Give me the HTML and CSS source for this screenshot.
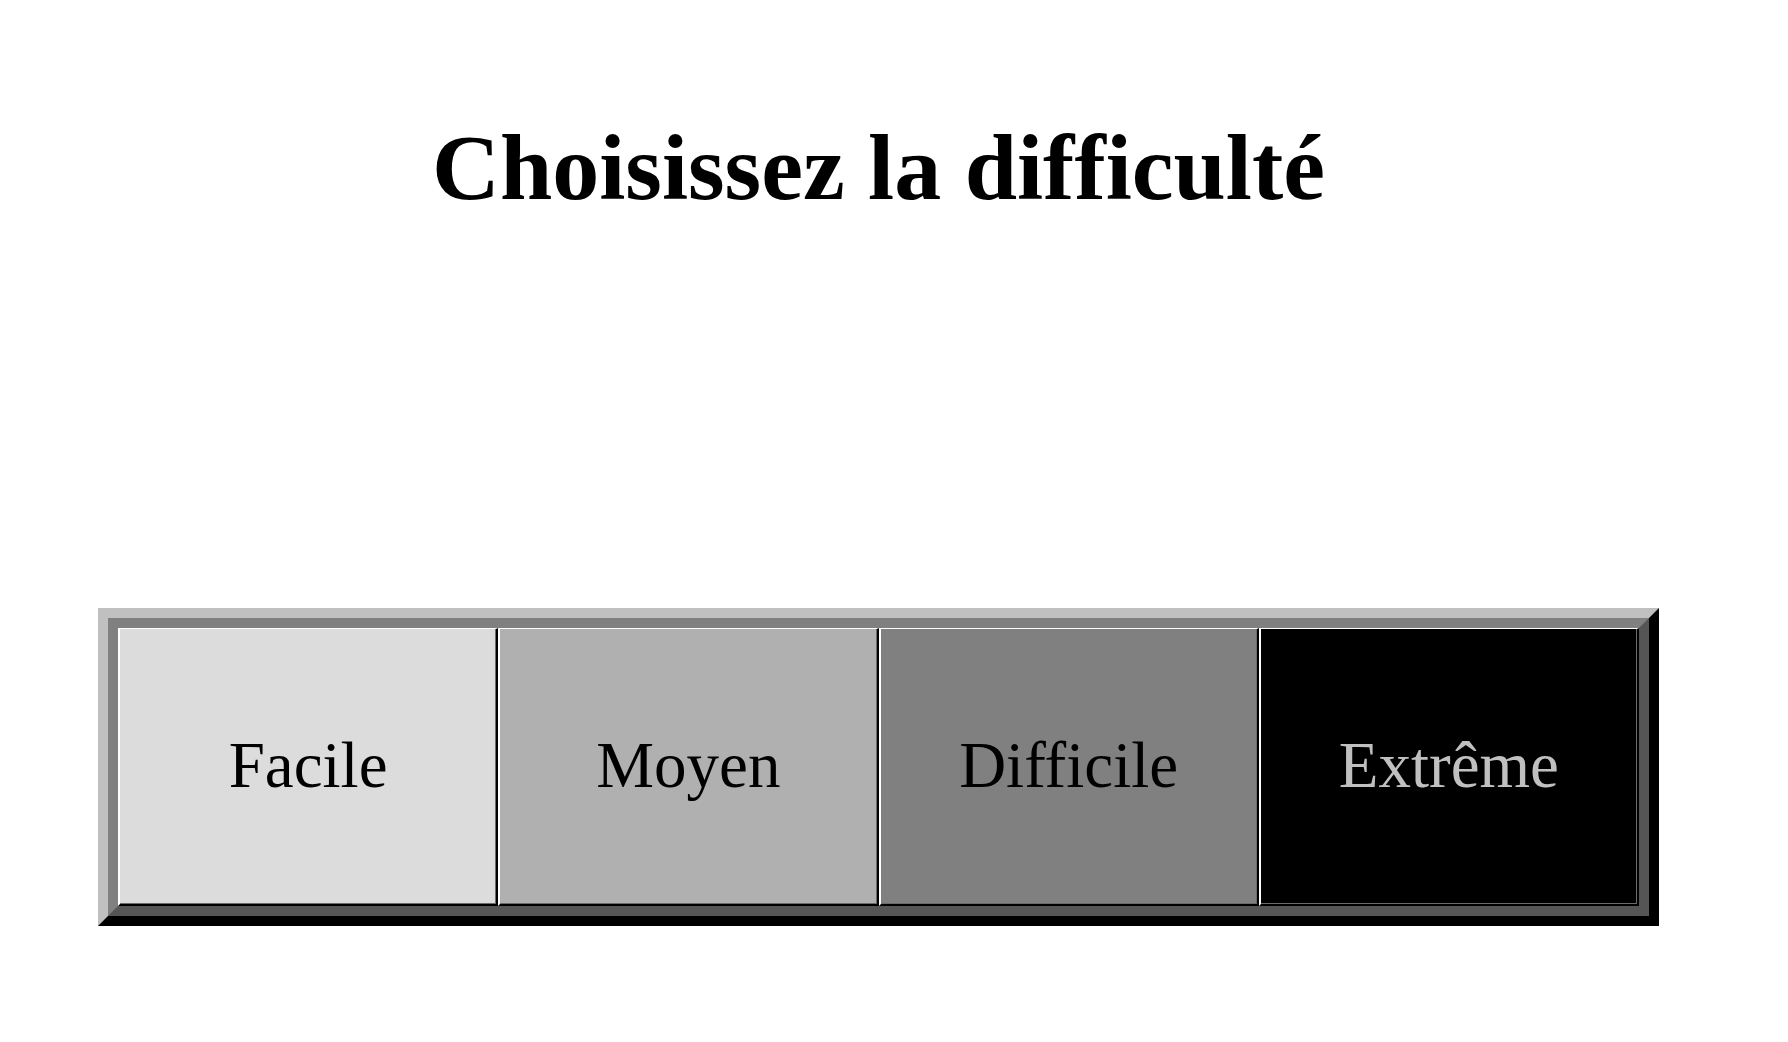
FILE: index.html
```html
<!DOCTYPE html>
<html lang="fr">
<head>
<meta charset="utf-8">
<title>Choisissez la difficulté</title>
<link rel="stylesheet" href="styles.css">
</head>
<body>
<div class="page">
  <h1 class="title">Choisissez la difficulté</h1>
  <div class="frame">
    <div class="levels">
      <div class="level level-easy">Facile</div>
      <div class="level level-medium">Moyen</div>
      <div class="level level-hard">Difficile</div>
      <div class="level level-extreme">Extrême</div>
    </div>
  </div>
</div>
</body>
</html>
```

FILE: styles.css
```css
html, body {
  margin: 0;
  padding: 0;
  background: #ffffff;
}

body {
  font-family: "Liberation Serif", "Times New Roman", serif;
  color: #000;
}

.page {
  width: 1561px;
  margin-left: 98px;
  padding-top: 113px;
}

.title {
  margin: 0;
  font-size: 94px;
  font-weight: bold;
  line-height: 108px;
  text-align: center;
}

.frame {
  margin-top: 387px;
  border: 10px solid;
  border-color: #c0c0c0 #000000 #000000 #c0c0c0;
}

.levels {
  display: grid;
  grid-template-columns: repeat(4, 1fr);
  height: 278px;
  border: 10px solid;
  border-color: #808080 #555555 #555555 #808080;
  box-sizing: content-box;
}

.level {
  display: flex;
  align-items: center;
  justify-content: center;
  font-size: 65px;
  border-top: 1px solid #ffffff;
  border-left: 2px solid #ffffff;
  border-right: 2px solid #000000;
  border-bottom: 2px solid #000000;
  box-shadow: inset -1px -1px 0 #6a6a6a;
  padding-bottom: 2px;
}

.level-easy { background: #dcdcdc; }
.level-medium { background: #b0b0b0; }
.level-hard { background: #808080; }
.level-extreme { background: #000000; color: #c0c0c0; }
```
